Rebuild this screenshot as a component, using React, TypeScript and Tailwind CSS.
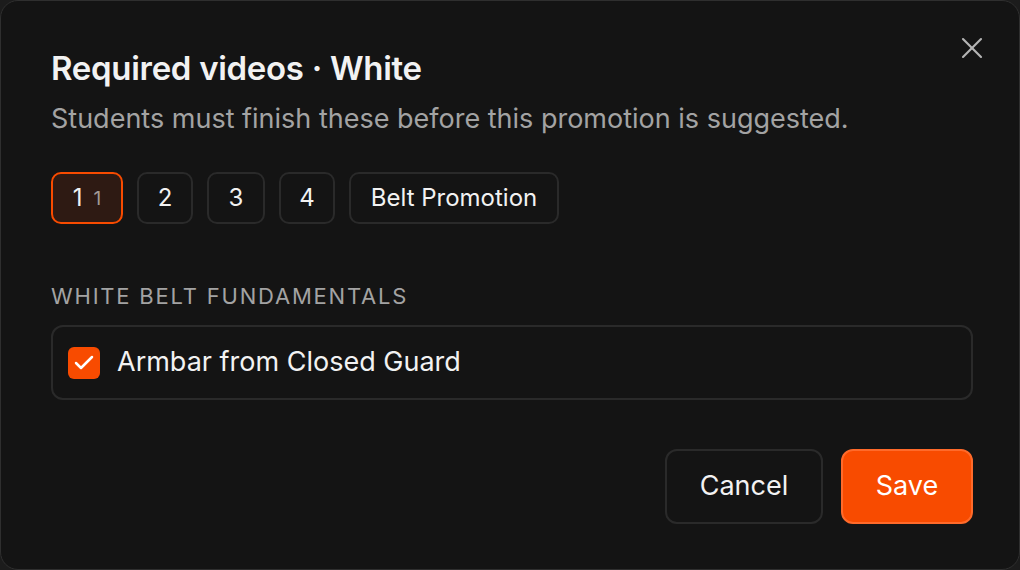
import { X, Check } from "lucide-react";

const tabs = [
  { label: "2", w: "w-[56px]" },
  { label: "3", w: "w-[58px]" },
  { label: "4", w: "w-[56px]" },
  { label: "Belt Promotion", w: "w-[210px]" },
];

export default function App() {
  return (
    <div
      className="w-[1020px] h-[570px] bg-[#1c1c1c] text-white"
      style={{ fontFamily: "Inter, 'Noto Sans', sans-serif" }}
    >
      <div className="relative w-full h-full rounded-[18px] border border-[#2f2f2f] bg-[#141414] pl-[50px] pr-[46px] pt-[47px] pb-[45px] flex flex-col">
        {/* Close */}
        <button className="absolute right-[29px] top-[29px] text-[#b5b5b5]">
          <X size={36} strokeWidth={1.4} />
        </button>

        {/* Header */}
        <h2 className="text-[33px] font-semibold leading-[40px] tracking-[-0.3px] text-[#f2f2f2]">
          Required videos · White
        </h2>
        <p className="mt-[13px] text-[27px] leading-[36px] text-[#a3a3a3]">
          Students must finish these before this promotion is suggested.
        </p>

        {/* Tabs */}
        <div className="mt-[35px] flex gap-[14px]">
          <button className="h-[52px] w-[72px] rounded-[10px] border-2 border-[#f84b00] bg-[#2e1a13] flex items-center justify-center gap-[11px]">
            <span className="text-[24px] text-[#f2f2f2]">1</span>
            <span className="text-[19px] text-[#a39a95] mt-[3px]">1</span>
          </button>
          {tabs.map((t) => (
            <button
              key={t.label}
              className={`h-[52px] ${t.w} rounded-[10px] border-2 border-[#2a2a2a] bg-[#141414] text-[24px] text-[#f2f2f2] flex items-center justify-center`}
            >
              {t.label}
            </button>
          ))}
        </div>

        {/* Section */}
        <div className="mt-[57px] text-[22px] leading-[30px] tracking-[1.8px] uppercase text-[#a3a3a3]">
          White belt fundamentals
        </div>
        <label className="mt-[14px] h-[75px] rounded-[12px] border-2 border-[#2a2a2a] flex items-center pl-[15px] gap-[17px]">
          <span className="w-[32px] h-[32px] rounded-[6px] bg-[#f84b00] flex items-center justify-center">
            <Check size={24} strokeWidth={2.5} className="text-white" />
          </span>
          <span className="text-[27px] text-[#f2f2f2]">Armbar from Closed Guard</span>
        </label>

        {/* Footer */}
        <div className="mt-auto flex justify-end gap-[18px]">
          <button className="h-[75px] w-[158px] rounded-[12px] border-2 border-[#2a2a2a] text-[27px] text-[#f2f2f2]">
            Cancel
          </button>
          <button className="h-[75px] w-[132px] rounded-[12px] border-2 border-[#ff6a2a] bg-[#f84b00] text-[27px] text-white">
            Save
          </button>
        </div>
      </div>
    </div>
  );
}
